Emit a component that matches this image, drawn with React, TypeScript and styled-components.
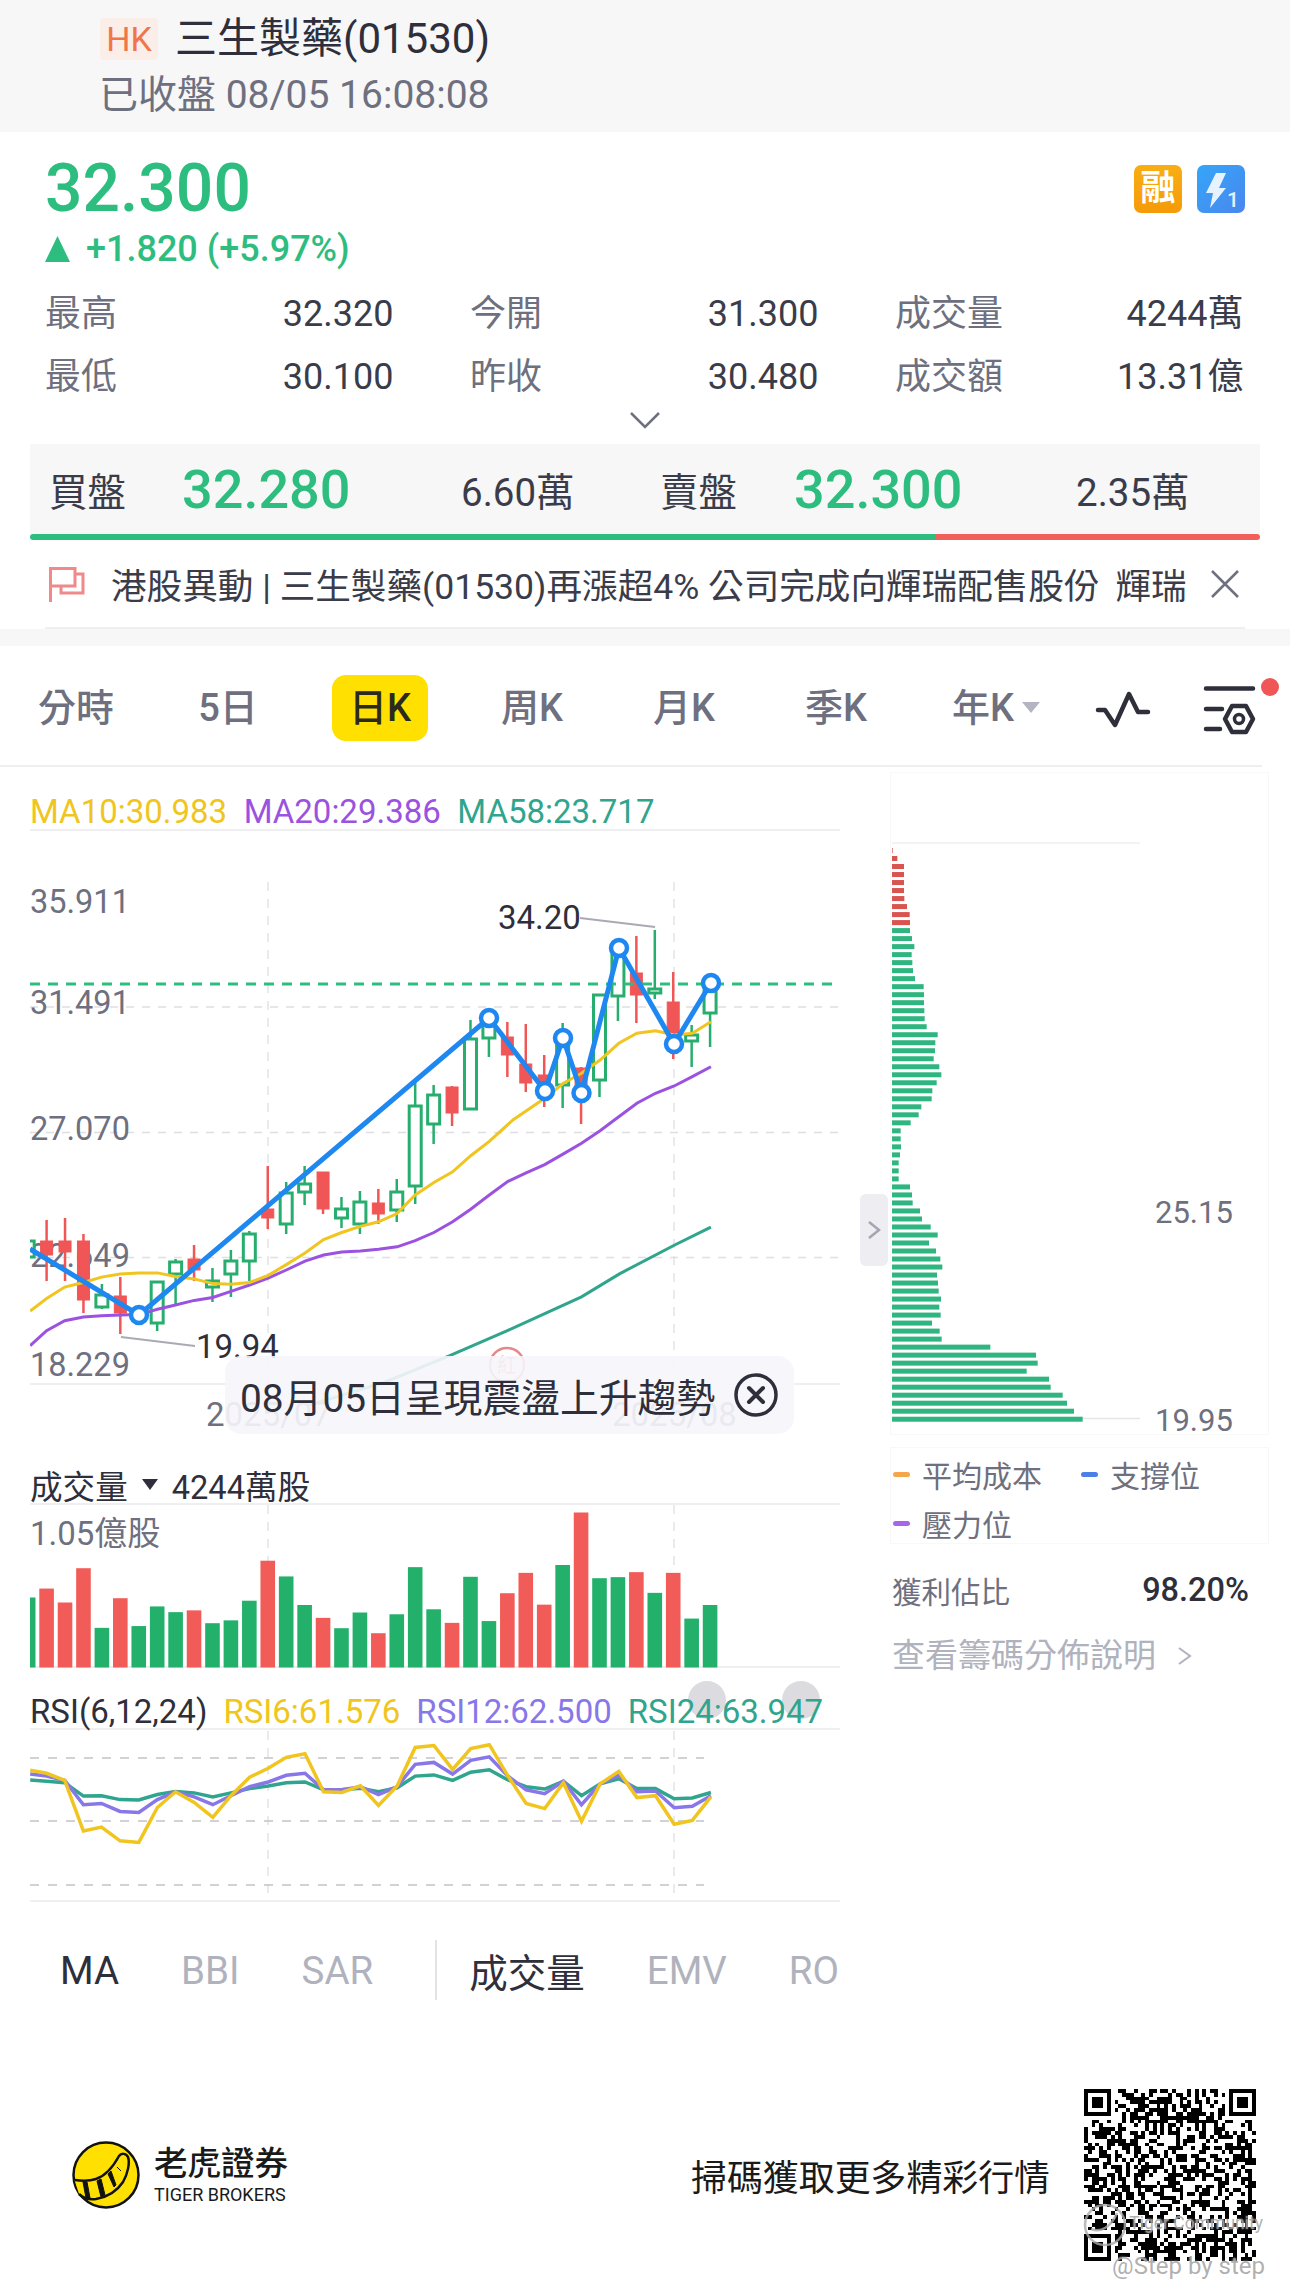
import React from 'react';
import styled, { createGlobalStyle } from 'styled-components';

const GREEN = '#2dbd7f';
const CANDLE_GREEN = '#27ae6e';
const RED = '#f05656';
const BLUE = '#1e88f0';
const YELLOW = '#f0c520';
const PURPLE = '#9b52e0';
const TEAL = '#2fa58e';
const TEXT = '#2e2f3b';
const MUTED = '#6e7080';

const GlobalStyle = createGlobalStyle`
  html, body { margin: 0; padding: 0; background: #fff; }
  body { font-family: Roboto, "Noto Sans CJK TC", sans-serif; color: ${TEXT}; }
  * { box-sizing: border-box; }
`;

const Page = styled.div`
  width: 1290px;
  height: 2295px;
  overflow: hidden;
  background: #fff;
`;

const Header = styled.header`
  height: 132px;
  padding: 17px 0 0 100px;
  background: #f7f7f7;
`;
const TitleRow = styled.div`
  display: flex;
  align-items: center;
  height: 44px;
  gap: 17px;
`;
const MarketBadge = styled.span`
  width: 58px;
  height: 42px;
  border-radius: 4px;
  background: #fbeee8;
  color: #f0764a;
  font-size: 34px;
  line-height: 42px;
  text-align: center;
`;
const Title = styled.h1`
  margin: 0;
  font-size: 42px;
  font-weight: 400;
  line-height: 44px;
  color: ${TEXT};
`;
const SubTitle = styled.div`
  margin-top: 12px;
  margin-left: -1px;
  font-size: 39px;
  line-height: 44px;
  color: ${MUTED};
`;

const Quote = styled.section`
  height: 515px;
  padding-top: 16px;
`;
const PriceRow = styled.div`
  display: flex;
  justify-content: space-between;
  align-items: center;
  height: 80px;
  padding: 2px 45px 0;
`;
const Price = styled.div`
  font-size: 66px;
  font-weight: 500;
  line-height: 78px;
  color: ${GREEN};
`;
const Badges = styled.div`
  display: flex;
  gap: 15px;
`;
const MarginBadge = styled.span`
  width: 48px;
  height: 48px;
  border-radius: 7px;
  background: linear-gradient(180deg, #f9ae14, #f59a08);
  color: #fff;
  font-size: 35px;
  font-weight: 700;
  line-height: 48px;
  text-align: center;
`;
const ChangeRow = styled.div`
  display: flex;
  align-items: center;
  gap: 16px;
  height: 42px;
  padding-left: 45px;
  font-size: 36px;
  font-weight: 500;
  color: ${GREEN};
`;
const Stats = styled.div`
  display: grid;
  grid-template-columns: repeat(3, 348.5px);
  column-gap: 76.5px;
  margin-top: 13px;
  padding-left: 45px;
`;
const Stat = styled.div`
  display: flex;
  justify-content: space-between;
  align-items: baseline;
  height: 63px;
  font-size: 36px;
  line-height: 63px;
`;
const StatLabel = styled.span`
  color: ${MUTED};
`;
const StatValue = styled.span`
  color: #3a3c4a;
`;
const Expand = styled.div`
  display: flex;
  justify-content: center;
  height: 35px;
  padding-top: 2px;
`;
const BidAsk = styled.div`
  display: flex;
  align-items: center;
  height: 90px;
  margin: 0 30px;
  padding-left: 19px;
  background: #f7f7f7;
`;
const BidCell = styled.span<{ $w: number; $price?: boolean }>`
  width: ${(p) => p.$w}px;
  flex: none;
  font-size: ${(p) => (p.$price ? 54 : 38.5)}px;
  font-weight: ${(p) => (p.$price ? 500 : 400)};
  color: ${(p) => (p.$price ? GREEN : '#3a3c4a')};
`;
const RatioBar = styled.div`
  display: flex;
  height: 6px;
  margin: 0 30px;
  border-radius: 3px;
  overflow: hidden;
`;
const RatioPart = styled.div<{ $color: string; $w: number }>`
  width: ${(p) => p.$w}px;
  background: ${(p) => p.$color};
`;
const News = styled.div`
  display: flex;
  align-items: center;
  height: 89px;
  margin: 0 45px;
  padding-left: 4px;
  border-bottom: 2px solid #efeff2;
`;
const NewsText = styled.div`
  flex: none;
  width: 1075px;
  margin-left: 23px;
  white-space: nowrap;
  font-size: 35.6px;
  color: #3a3c4a;
`;
const NewsTail = styled.span`
  margin-left: 16px;
`;
const NewsClose = styled.svg`
  flex: none;
  margin-left: 24px;
`;
const Band = styled.div`
  height: 17px;
  background: #f7f7f7;
`;

const TabBar = styled.nav`
  display: flex;
  align-items: center;
  height: 120px;
  padding-top: 3px;
  border-bottom: 2px solid #efeff2;
  margin-right: 28px;
`;
const Tab = styled.div<{ $active?: boolean; $shift?: number }>`
  display: flex;
  justify-content: center;
  align-items: center;
  flex: none;
  width: 152px;
  height: 66px;
  padding-left: ${(p) => p.$shift ?? 0}px;
  font-size: 38px;
  font-weight: 500;
  color: ${(p) => (p.$active ? '#2a2a1e' : MUTED)};
  & > span {
    padding: 0 ${(p) => (p.$active ? 17 : 0)}px;
    height: 66px;
    line-height: 66px;
    border-radius: 14px;
    background: ${(p) => (p.$active ? '#ffe000' : 'transparent')};
  }
`;
const Caret = styled.i`
  width: 0;
  height: 0;
  margin-left: 8px;
  border-left: 9px solid transparent;
  border-right: 9px solid transparent;
  border-top: 11px solid #b4b5c0;
`;
const ToolIcons = styled.svg`
  flex: none;
  width: 230px;
  height: 115px;
  margin-right: -28px;
`;

const Body = styled.div`
  display: flex;
`;
const LeftColumn = styled.div`
  flex: none;
  width: 810px;
  margin-left: 30px;
`;
const LegendRow = styled.div`
  display: flex;
  gap: 16.5px;
  align-items: center;
  height: 64px;
  padding-top: 26px;
  border-bottom: 2px solid #efeff2;
  font-size: 33px;
  white-space: nowrap;
`;
const Colored = styled.span<{ $color: string }>`
  position: relative;
  color: ${(p) => p.$color};
`;
const ChartWrap = styled.div`
  position: relative;
`;
const ChartSvg = styled.svg<{ $bleed?: boolean }>`
  display: block;
  overflow: ${(p) => (p.$bleed ? 'visible' : 'hidden')};
  font-family: Roboto, "Noto Sans CJK TC", sans-serif;
`;
const PatternTip = styled.div`
  position: absolute;
  left: 195px;
  top: 525px;
  display: flex;
  align-items: center;
  justify-content: space-between;
  width: 569px;
  height: 78px;
  padding: 0 16px 0 15px;
  border-radius: 16px;
  background: rgba(246, 246, 251, 0.9);
  font-size: 38.8px;
  white-space: nowrap;
  color: ${TEXT};
`;
const VolumeHead = styled.div`
  display: flex;
  align-items: center;
  gap: 14px;
  height: 50px;
  padding-top: 10px;
  border-bottom: 2px solid #efeff2;
  font-size: 32.6px;
  color: ${TEXT};
`;
const DownMark = styled.i`
  width: 0;
  height: 0;
  border-left: 8px solid transparent;
  border-right: 8px solid transparent;
  border-top: 11px solid ${TEXT};
`;
const RsiHead = styled.div`
  position: relative;
  display: flex;
  align-items: center;
  gap: 16px;
  height: 62px;
  padding-top: 26px;
  border-bottom: 2px solid #efeff2;
  font-size: 33px;
  white-space: nowrap;
`;
const FaintDot = styled.i<{ $left: number }>`
  position: absolute;
  left: ${(p) => p.$left}px;
  top: 13px;
  width: 38px;
  height: 38px;
  border-radius: 50%;
  background: #dcdce0;
`;
const Indicators = styled.div`
  display: flex;
  align-items: center;
  gap: 62px;
  width: 810px;
  height: 136px;
  padding-left: 30px;
  overflow: hidden;
  white-space: nowrap;
`;
const Indicator = styled.span<{ $active?: boolean }>`
  flex: none;
  font-size: 38.5px;
  color: ${(p) => (p.$active ? TEXT : '#b0b2bd')};
`;
const IndicatorDivider = styled.i`
  flex: none;
  width: 2px;
  height: 60px;
  margin-right: -30px;
  background: #e4e4e8;
`;

const RightColumn = styled.aside`
  position: relative;
  flex: none;
  width: 379px;
  margin-left: 50px;
  padding-top: 5px;
`;
const DistCard = styled.div`
  border: 1px solid #f8f8f9;
`;
const CollapseHandle = styled.div`
  position: absolute;
  left: -30px;
  top: 427px;
  display: flex;
  align-items: center;
  justify-content: center;
  width: 28px;
  height: 72px;
  border-radius: 6px;
  background: #eeeef2;
`;
const DistLegend = styled.div`
  display: grid;
  grid-template-columns: 188px 1fr;
  row-gap: 10px;
  height: 97px;
  margin-top: 12px;
  padding: 7px 0 0 2px;
  border: 1px solid #f8f8f9;
  font-size: 30px;
  color: ${MUTED};
`;
const LegendItem = styled.div`
  display: flex;
  align-items: center;
  gap: 12px;
  height: 38px;
`;
const Swatch = styled.i<{ $color: string }>`
  width: 17px;
  height: 5px;
  border-radius: 3px;
  background: ${(p) => p.$color};
`;
const ProfitRow = styled.div`
  display: flex;
  justify-content: space-between;
  align-items: center;
  width: 359px;
  height: 44px;
  margin-top: 24px;
  padding-left: 2px;
  font-size: 29.5px;
  color: ${MUTED};
`;
const ProfitValue = styled.b`
  font-size: 32.5px;
  font-weight: 500;
  color: ${TEXT};
`;
const ChipsHelp = styled.div`
  display: flex;
  align-items: center;
  gap: 22px;
  margin-top: 22px;
  padding-left: 2px;
  font-size: 33px;
  line-height: 44px;
  color: #b0b2bd;
`;

const Footer = styled.footer`
  position: relative;
  display: flex;
  align-items: center;
  height: 240px;
  margin-top: 17px;
  padding: 0 34px 0 72px;
`;
const Brand = styled.div`
  margin-left: 14px;
`;
const BrandName = styled.div`
  font-size: 33.5px;
  font-weight: 500;
  line-height: 40px;
  color: #1a1a1a;
`;
const BrandSub = styled.div`
  font-size: 18px;
  line-height: 22px;
  color: #1a1a1a;
`;
const ScanText = styled.div`
  margin-left: auto;
  margin-right: 34px;
  font-size: 35.9px;
  color: #1a1a1a;
`;
const Watermark = styled.div<{ $right: number; $top: number; $size: number }>`
  position: absolute;
  right: ${(p) => p.$right}px;
  top: ${(p) => p.$top}px;
  font-size: ${(p) => p.$size}px;
  line-height: 1.2;
  white-space: nowrap;
  color: rgba(150, 150, 150, 0.75);
  text-shadow: 0 0 2px rgba(255, 255, 255, 0.9);
`;
const WatermarkMark = styled.svg`
  position: absolute;
  left: 1083px;
  top: 148px;
`;

// reference coordinates were read off the crops, these turn them into page px
const zx = (x: number) => x / 1.823;
const z2 = (y: number) => 640 + y / 3;
const z3 = (y: number) => 1120 + y / 2.8;
const z5 = (y: number) => 1680 + y / 2.55;
const slotX = (i: number) => 46.6 + 18.43 * i;

// index, wickTop, wickBottom, bodyTop, bodyBottom, up
type Candle = [number, number, number, number, number, boolean];
const candles: Candle[] = [
  [-1, 1238, 1262, 1241, 1257, true],
  [0, 1220, 1281, 1241, 1255, false],
  [1, 1218, 1281, 1241, 1252, false],
  [2, 1234, 1313, 1241, 1300, false],
  [3, 1284, 1309, 1295, 1307, true],
  [4, 1277, 1334, 1296, 1313, false],
  [5, 1305, 1324, 1311, 1320, true],
  [6, 1281, 1331, 1282, 1323, true],
  [7, 1259, 1304, 1262, 1274, true],
  [8, 1245, 1281, 1259, 1270, false],
  [9, 1268, 1302, 1281, 1287, true],
  [10, 1250, 1297, 1261, 1274, true],
  [11, 1231, 1281, 1234, 1261, true],
  [12, 1166, 1229, 1209, 1218, false],
  [13, 1182, 1234, 1193, 1224, true],
  [14, 1166, 1205, 1184, 1192, true],
  [15, 1172, 1214, 1172, 1209, false],
  [16, 1197, 1228, 1209, 1218, true],
  [17, 1191, 1234, 1202, 1224, true],
  [18, 1189, 1224, 1203, 1214, false],
  [19, 1179, 1222, 1192, 1210, true],
  [20, 1080, 1204, 1106, 1186, true],
  [21, 1085, 1144, 1095, 1124, true],
  [22, 1086, 1126, 1087, 1113, false],
  [23, 1020, 1110, 1039, 1109, true],
  [24, 1018, 1057, 1020, 1038, true],
  [25, 1022, 1077, 1037, 1055, false],
  [26, 1024, 1092, 1064, 1083, false],
  [27, 1055, 1107, 1075, 1098, false],
  [28, 1023, 1108, 1033, 1085, true],
  [29, 1067, 1124, 1068, 1093, false],
  [30, 995, 1097, 995, 1080, true],
  [31, 943, 1021, 947, 996, true],
  [32, 936, 1023, 973, 995, false],
  [33, 930, 999, 989, 993, true],
  [34, 972, 1059, 1002, 1043, false],
  [35, 1025, 1067, 1035, 1041, true],
  [36, 985, 1047, 985, 1013, true],
];

const pts = (list: number[][]) => list.map((p) => p.map((n) => n.toFixed(1)).join(',')).join(' ');

const ma10 = [
  ...[[55, 535], [85, 500], [118, 468], [152, 455], [185, 440], [219, 431], [253, 428], [287, 428], [320, 438], [354, 445], [388, 458], [421, 460], [455, 455], [489, 435], [522, 405], [556, 372], [590, 335], [623, 315], [657, 298], [690, 285], [724, 262], [757, 210], [791, 175], [825, 145], [858, 100], [892, 60], [935, 0]].map(([x, y]) => [zx(x), z3(y)]),
  ...[[993, 1375], [1027, 1330], [1060, 1300], [1094, 1260], [1128, 1210], [1161, 1180], [1195, 1172], [1229, 1185], [1262, 1180], [1296, 1145]].map(([x, y]) => [zx(x), z2(y)]),
];
const ma20 = [
  ...[[55, 632], [85, 590], [118, 562], [152, 552], [185, 548], [219, 546], [253, 545], [287, 530], [320, 518], [354, 505], [388, 497], [421, 480], [455, 462], [489, 443], [522, 420], [556, 395], [590, 378], [623, 370], [657, 367], [690, 362], [724, 355], [757, 338], [791, 315], [825, 285], [858, 250], [892, 210], [926, 172], [959, 148], [993, 125], [1027, 95], [1060, 65], [1094, 30], [1120, 0]].map(([x, y]) => [zx(x), z3(y)]),
  ...[[1161, 1390], [1195, 1360], [1229, 1338], [1262, 1310], [1296, 1280]].map(([x, y]) => [zx(x), z2(y)]),
];
const ma58 = [[560, 800], [700, 735], [820, 660], [925, 590], [1060, 495], [1130, 430], [1230, 350], [1296, 300]].map(([x, y]) => [zx(x), z3(y)]);

const swings = [[139, 1315], [489, 1018], [545, 1091], [563, 1038], [581.5, 1093], [619, 948], [674, 1044], [711, 983]];

const volumes: [number, number, boolean][] = [
  [-1, 1337, true], [0, 1312, false], [1, 1351, false], [2, 1255, false], [3, 1422, true], [4, 1339, false],
  [5, 1417, true], [6, 1362, true], [7, 1378, true], [8, 1373, false], [9, 1409, true], [10, 1401, true],
  [11, 1346, true], [12, 1234, false], [13, 1278, true], [14, 1358, true], [15, 1394, false], [16, 1423, true],
  [17, 1379, true], [18, 1437, false], [19, 1384, true], [20, 1252, true], [21, 1370, true], [22, 1408, false],
  [23, 1279, true], [24, 1403, true], [25, 1325, false], [26, 1268, false], [27, 1357, false], [28, 1246, true],
  [29, 1099, false], [30, 1283, true], [31, 1280, true], [32, 1266, false], [33, 1324, true], [34, 1268, false],
  [35, 1396, true], [36, 1358, true],
];

const rsiX = [55, 85, 118, 152, 185, 219, 253, 287, 320, 354, 388, 421, 455, 489, 522, 556, 590, 623, 657, 690, 724, 757, 791, 825, 858, 892, 926, 959, 993, 1027, 1060, 1094, 1128, 1161, 1195, 1229, 1262, 1296];
const rsi6 = [230, 238, 256, 385, 375, 410, 414, 325, 285, 312, 350, 295, 248, 225, 197, 188, 285, 287, 270, 320, 270, 172, 167, 228, 175, 165, 245, 315, 328, 262, 360, 265, 233, 300, 295, 368, 358, 298];
const rsi12 = [240, 245, 256, 318, 315, 335, 338, 305, 285, 298, 318, 295, 272, 260, 243, 238, 280, 280, 272, 292, 272, 215, 210, 240, 205, 196, 245, 280, 290, 258, 318, 265, 243, 285, 283, 326, 322, 295];
const rsi24 = [255, 258, 262, 296, 295, 305, 306, 292, 284, 288, 298, 288, 277, 270, 262, 260, 280, 280, 276, 285, 275, 245, 242, 256, 235, 229, 255, 272, 278, 258, 295, 265, 252, 277, 277, 303, 301, 287];
const rsiLine = (ys: number[]) => pts(ys.map((y, i) => [zx(rsiX[i]), z5(y)]));

// chip distribution, right end of every row in crop px
const chipEnds = [98, 112, 132, 132, 132, 132, 133, 141, 149, 150, 150, 156, 163, 155, 157, 159, 165, 191, 192, 192, 193, 194, 200, 233, 226, 225, 221, 238, 244, 230, 217, 215, 184, 176, 152, 122, 122, 123, 120, 116, 116, 116, 150, 156, 158, 180, 186, 212, 233, 207, 228, 241, 247, 231, 234, 236, 243, 238, 242, 216, 239, 245, 391, 528, 533, 500, 567, 572, 608, 621, 642, 668];

const priceLabels: [string, number][] = [['35.911', 902], ['31.491', 1003], ['27.070', 1129], ['22.649', 1256], ['18.229', 1365]];
const gridLines = [1007, 1132.5, 1257.5];

const qrSize = 45;
const qrPath = (() => {
  let seed = 1530;
  const next = () => {
    seed = (seed * 1103515245 + 12345) & 0x7fffffff;
    return (seed >> 16) & 1;
  };
  const inFinder = (x: number, y: number, ox: number, oy: number) => x >= ox - 1 && x <= ox + 7 && y >= oy - 1 && y <= oy + 7;
  const finderCell = (x: number, y: number, ox: number, oy: number) => {
    const dx = x - ox;
    const dy = y - oy;
    if (dx < 0 || dy < 0 || dx > 6 || dy > 6) return false;
    return dx === 0 || dy === 0 || dx === 6 || dy === 6 || (dx >= 2 && dx <= 4 && dy >= 2 && dy <= 4);
  };
  let d = '';
  for (let y = 0; y < qrSize; y++) {
    for (let x = 0; x < qrSize; x++) {
      const random = next() === 1;
      const corners = [[0, 0], [qrSize - 7, 0], [0, qrSize - 7]];
      const corner = corners.find(([ox, oy]) => inFinder(x, y, ox, oy));
      const on = corner ? finderCell(x, y, corner[0], corner[1]) : random;
      if (on) d += `M${x} ${y}h1v1h-1z`;
    }
  }
  return d;
})();

const DashedVerticals = ({ y1, y2 }: { y1: number; y2: number }) => (
  <>
    {[268, 674].map((x) => (
      <line key={x} x1={x} x2={x} y1={y1} y2={y2} stroke="#e3e3e7" strokeWidth="1.5" strokeDasharray="9 8" />
    ))}
  </>
);

const MainChart = () => (
  <ChartSvg width="810" height="624" viewBox="30 831 810 624">
    <DashedVerticals y1={882} y2={1383} />
    {gridLines.map((y) => (
      <line key={y} x1="30" x2="840" y1={y} y2={y} stroke="#dfdfe3" strokeWidth="1.5" strokeDasharray="8 8" />
    ))}
    <line x1="30" x2="840" y1="1384" y2="1384" stroke="#efeff2" strokeWidth="2" />
    {priceLabels.map(([label, y]) => (
      <text key={label} x="30" y={y + 11} fontSize="32.5" fill={MUTED}>
        {label}
      </text>
    ))}
    <text x="206" y="1426" fontSize="33" fill={MUTED}>2025/07</text>
    <text x="612" y="1426" fontSize="33" fill={MUTED}>2025/08</text>
    <circle cx="507" cy="1365" r="17" fill="none" stroke="#e06a6a" strokeWidth="2.5" opacity="0.8" />
    <text x="507" y="1373" fontSize="20" fill="#e06a6a" textAnchor="middle" opacity="0.8">紅</text>

    {candles.map(([i, wt, wb, bt, bb, up]) => {
      const x = slotX(i);
      const color = up ? CANDLE_GREEN : RED;
      return (
        <g key={i}>
          <line x1={x} x2={x} y1={wt} y2={wb} stroke={color} strokeWidth="2.5" />
          <rect
            x={x - 6}
            y={bt}
            width="12"
            height={bb - bt}
            fill={up ? '#fff' : color}
            stroke={color}
            strokeWidth={up ? 3 : 1}
          />
        </g>
      );
    })}
    <polyline points={pts(ma58)} fill="none" stroke={TEAL} strokeWidth="3" />
    <polyline points={pts(ma20)} fill="none" stroke={PURPLE} strokeWidth="3" />
    <polyline points={pts(ma10)} fill="none" stroke={YELLOW} strokeWidth="3" />

    <line x1="30" x2="832" y1="984" y2="984" stroke={GREEN} strokeWidth="3" strokeDasharray="10 8" />

    <polyline points={pts([[30, 1249], ...swings])} fill="none" stroke={BLUE} strokeWidth="5" />
    {swings.map(([x, y]) => (
      <circle key={x} cx={x} cy={y} r="8" fill="#fff" stroke={BLUE} strokeWidth="4.5" />
    ))}

    <text x="498" y="929" fontSize="33" fill={TEXT}>34.20</text>
    <line x1="580" y1="918" x2="655" y2="927" stroke="#a9aab4" strokeWidth="2" />
    <text x="196" y="1358" fontSize="33" fill={TEXT}>19.94</text>
    <line x1="121" y1="1337" x2="195" y2="1346" stroke="#a9aab4" strokeWidth="2" />
  </ChartSvg>
);

const VolumeChart = () => (
  <ChartSvg width="810" height="163" viewBox="30 1505 810 163">
    <DashedVerticals y1={1505} y2={1666} />
    <line x1="30" x2="840" y1="1667" y2="1667" stroke="#efeff2" strokeWidth="2" />
    <text x="30" y="1545" fontSize="33" fill={MUTED}>1.05億股</text>
    {volumes.map(([i, top, up]) => (
      <rect key={i} x={slotX(i) - 7.3} y={z3(top)} width="14.6" height={(1533 - top) / 2.8} fill={up ? '#22b06a' : '#f25c58'} />
    ))}
  </ChartSvg>
);

const RsiChart = () => (
  <ChartSvg width="810" height="172" viewBox="30 1730 810 172">
    <DashedVerticals y1={1731} y2={1900} />
    {[1758, 1821, 1885].map((y) => (
      <line key={y} x1="30" x2="704" y1={y} y2={y} stroke="#c4c4c9" strokeWidth="1.5" strokeDasharray="9 9" />
    ))}
    <line x1="30" x2="840" y1="1901" y2="1901" stroke="#efeff2" strokeWidth="2" />
    <polyline points={rsiLine(rsi24)} fill="none" stroke={TEAL} strokeWidth="3.5" />
    <polyline points={rsiLine(rsi12)} fill="none" stroke="#8877e8" strokeWidth="3.5" />
    <polyline points={rsiLine(rsi6)} fill="none" stroke={YELLOW} strokeWidth="3.5" />
  </ChartSvg>
);

const ChipChart = () => (
  <ChartSvg $bleed width="377" height="661" viewBox="891 773 377 661">
    <line x1="892" x2="1140" y1="843" y2="843" stroke="#efeff2" strokeWidth="1.5" />
    <line x1="892" x2="1140" y1="1418.5" y2="1418.5" stroke="#e6e6ea" strokeWidth="1.5" />
    {chipEnds.map((end, i) => (
      <rect key={i} x="892" y={850 + i * 8.01 - 2} width={(end - 96) / 3} height="5" fill={i < 10 ? '#d9534f' : '#2fb57f'} />
    ))}
    <text x="1155" y="1223" fontSize="31" fill={MUTED}>25.15</text>
    <text x="1155" y="1431" fontSize="31" fill={MUTED}>19.95</text>
  </ChartSvg>
);

const Logo = () => (
  <svg width="68" height="68" viewBox="0 0 68 68">
    <circle cx="34" cy="34" r="32.5" fill="#ffe000" stroke="#111" strokeWidth="2.5" />
    <path d="M2.5 39 C10 40 18 40 24 38 C33 35 41 26 47 15 C49 12 54 12 56 16 C58 22 56 32 51 41 C45 50 36 56 24 58 C17 59 11 57 7 53" fill="#ffe000" stroke="#111" strokeWidth="2.5" />
    <path d="M11 41 L14 57 L18 57 L15 41Z M25 40 L29 56 L33 54 L29 38Z M36 33 L42 46 L44 44 L39 30Z M45 26 L49 30" fill="#111" stroke="#111" strokeWidth="1" />
  </svg>
);

const App = () => (
  <Page>
    <GlobalStyle />
    <Header>
      <TitleRow>
        <MarketBadge>HK</MarketBadge>
        <Title>三生製藥(01530)</Title>
      </TitleRow>
      <SubTitle>已收盤 08/05 16:08:08</SubTitle>
    </Header>

    <Quote>
      <PriceRow>
        <Price>32.300</Price>
        <Badges>
          <MarginBadge>融</MarginBadge>
          <svg width="48" height="48" viewBox="0 0 48 48">
            <defs>
              <linearGradient id="flash" x1="0" y1="0" x2="1" y2="1">
                <stop offset="0" stopColor="#35a6f8" />
                <stop offset="1" stopColor="#4a86ee" />
              </linearGradient>
            </defs>
            <rect width="48" height="48" rx="7" fill="url(#flash)" />
            <path d="M19 8 H29 L22 23 H29 L13 43 L16 28 H9Z" fill="#e6f3ff" />
            <text x="36" y="42" fontSize="21" fontWeight="500" fill="#e6f3ff" textAnchor="middle" fontFamily="Roboto, sans-serif">1</text>
          </svg>
        </Badges>
      </PriceRow>
      <ChangeRow>
        <svg width="25" height="26" viewBox="0 0 25 26">
          <path d="M12.5 0 L25 26 H0Z" fill={GREEN} />
        </svg>
        +1.820 (+5.97%)
      </ChangeRow>
      <Stats>
        <Stat><StatLabel>最高</StatLabel><StatValue>32.320</StatValue></Stat>
        <Stat><StatLabel>今開</StatLabel><StatValue>31.300</StatValue></Stat>
        <Stat><StatLabel>成交量</StatLabel><StatValue>4244萬</StatValue></Stat>
        <Stat><StatLabel>最低</StatLabel><StatValue>30.100</StatValue></Stat>
        <Stat><StatLabel>昨收</StatLabel><StatValue>30.480</StatValue></Stat>
        <Stat><StatLabel>成交額</StatLabel><StatValue>13.31億</StatValue></Stat>
      </Stats>
      <Expand>
        <svg width="32" height="18" viewBox="0 0 32 18">
          <path d="M2 2 L16 16 L30 2" fill="none" stroke={MUTED} strokeWidth="2.5" />
        </svg>
      </Expand>
      <BidAsk>
        <BidCell $w={133}>買盤</BidCell>
        <BidCell $w={279} $price>32.280</BidCell>
        <BidCell $w={199}>6.60萬</BidCell>
        <BidCell $w={134}>賣盤</BidCell>
        <BidCell $w={282} $price>32.300</BidCell>
        <BidCell $w={120}>2.35萬</BidCell>
      </BidAsk>
      <RatioBar>
        <RatioPart $color="#2dbd7f" $w={906} />
        <RatioPart $color="#f05f5a" $w={324} />
      </RatioBar>
      <News>
        <svg width="39" height="38" viewBox="49 566 39 38">
          <path d="M50.5 568 V603 M50.5 569.5 H75 V587 H50.5 M75 575 H83 V594 H61 V587" fill="none" stroke="#ef8a8a" strokeWidth="3" />
        </svg>
        <NewsText>
          港股異動 | 三生製藥(01530)再漲超4% 公司完成向輝瑞配售股份
          <NewsTail>輝瑞</NewsTail>
        </NewsText>
        <NewsClose width="30" height="30" viewBox="0 0 30 30">
          <path d="M2 2 L28 28 M28 2 L2 28" fill="none" stroke={MUTED} strokeWidth="2.5" />
        </NewsClose>
      </News>
      <Band />
    </Quote>

    <section>
      <TabBar>
        <Tab><span>分時</span></Tab>
        <Tab><span>5日</span></Tab>
        <Tab $active><span>日K</span></Tab>
        <Tab><span>周K</span></Tab>
        <Tab><span>月K</span></Tab>
        <Tab><span>季K</span></Tab>
        <Tab $shift={16}><span>年K</span><Caret /></Tab>
        <ToolIcons viewBox="1063 650 230 115">
          <polyline points="1097,710 1104,710 1114,725 1128,694 1137,712 1147,712" fill="none" stroke={TEXT} strokeWidth="4.5" strokeLinecap="round" strokeLinejoin="round" />
          <path d="M1205 688.5 H1252 M1205 709 H1221 M1205 729 H1219" stroke={TEXT} strokeWidth="4.5" strokeLinecap="round" />
          <path d="M1231 706 H1245 L1252 719 L1245 732 H1231 L1224 719Z" fill="none" stroke={TEXT} strokeWidth="4.5" strokeLinejoin="round" />
          <circle cx="1238" cy="719" r="4.5" fill="none" stroke={TEXT} strokeWidth="3.5" />
          <circle cx="1269" cy="687" r="9" fill={RED} />
        </ToolIcons>
      </TabBar>
      <Body>
        <LeftColumn>
          <LegendRow>
            <Colored $color={YELLOW}>MA10:30.983</Colored>
            <Colored $color={PURPLE}>MA20:29.386</Colored>
            <Colored $color={TEAL}>MA58:23.717</Colored>
          </LegendRow>
          <ChartWrap>
            <MainChart />
            <PatternTip>
              08月05日呈現震盪上升趨勢
              <svg width="44" height="44" viewBox="0 0 44 44">
                <circle cx="22" cy="22" r="20" fill="none" stroke={TEXT} strokeWidth="3.5" />
                <path d="M15 15 L29 29 M29 15 L15 29" stroke={TEXT} strokeWidth="4" strokeLinecap="round" />
              </svg>
            </PatternTip>
          </ChartWrap>
          <VolumeHead>
            成交量
            <DownMark />
            4244萬股
          </VolumeHead>
          <VolumeChart />
          <RsiHead>
            <FaintDot $left={658} />
            <FaintDot $left={752} />
            <Colored $color={TEXT}>RSI(6,12,24)</Colored>
            <Colored $color={YELLOW}>RSI6:61.576</Colored>
            <Colored $color="#8877e8">RSI12:62.500</Colored>
            <Colored $color={TEAL}>RSI24:63.947</Colored>
          </RsiHead>
          <RsiChart />
          <Indicators>
            <Indicator $active>MA</Indicator>
            <Indicator>BBI</Indicator>
            <Indicator>SAR</Indicator>
            <IndicatorDivider />
            <Indicator $active>成交量</Indicator>
            <Indicator>EMV</Indicator>
            <Indicator>RO</Indicator>
          </Indicators>
        </LeftColumn>
        <RightColumn>
          <CollapseHandle>
            <svg width="14" height="20" viewBox="0 0 14 20">
              <path d="M2 2 L12 10 L2 18" fill="none" stroke="#a4a5b0" strokeWidth="2.5" />
            </svg>
          </CollapseHandle>
          <DistCard>
            <ChipChart />
          </DistCard>
          <DistLegend>
            <LegendItem><Swatch $color="#f5a54a" />平均成本</LegendItem>
            <LegendItem><Swatch $color="#4a80e8" />支撐位</LegendItem>
            <LegendItem><Swatch $color="#a965e8" />壓力位</LegendItem>
          </DistLegend>
          <ProfitRow>
            獲利佔比
            <ProfitValue>98.20%</ProfitValue>
          </ProfitRow>
          <ChipsHelp>
            查看籌碼分佈說明
            <svg width="14" height="20" viewBox="0 0 14 20">
              <path d="M1 2 L12 10 L1 18" fill="none" stroke="#b0b2bd" strokeWidth="2" />
            </svg>
          </ChipsHelp>
        </RightColumn>
      </Body>
    </section>

    <Footer>
      <Logo />
      <Brand>
        <BrandName>老虎證券</BrandName>
        <BrandSub>TIGER BROKERS</BrandSub>
      </Brand>
      <ScanText>掃碼獲取更多精彩行情</ScanText>
      <svg width="172" height="172" viewBox={`0 0 ${qrSize} ${qrSize}`} shapeRendering="crispEdges">
        <path d={qrPath} fill="#000" />
      </svg>
      <WatermarkMark width="44" height="44" viewBox="0 0 44 44">
        <circle cx="22" cy="22" r="20" fill="none" stroke="rgba(170,170,170,0.8)" strokeWidth="2.5" />
        <path d="M8 26 C18 30 28 24 34 10" fill="none" stroke="rgba(170,170,170,0.8)" strokeWidth="2.5" />
      </WatermarkMark>
      <Watermark $right={27} $top={158} $size={17.5}>Tiger Community</Watermark>
      <Watermark $right={25} $top={197} $size={24}>@Step by step</Watermark>
    </Footer>
  </Page>
);

export default App;
